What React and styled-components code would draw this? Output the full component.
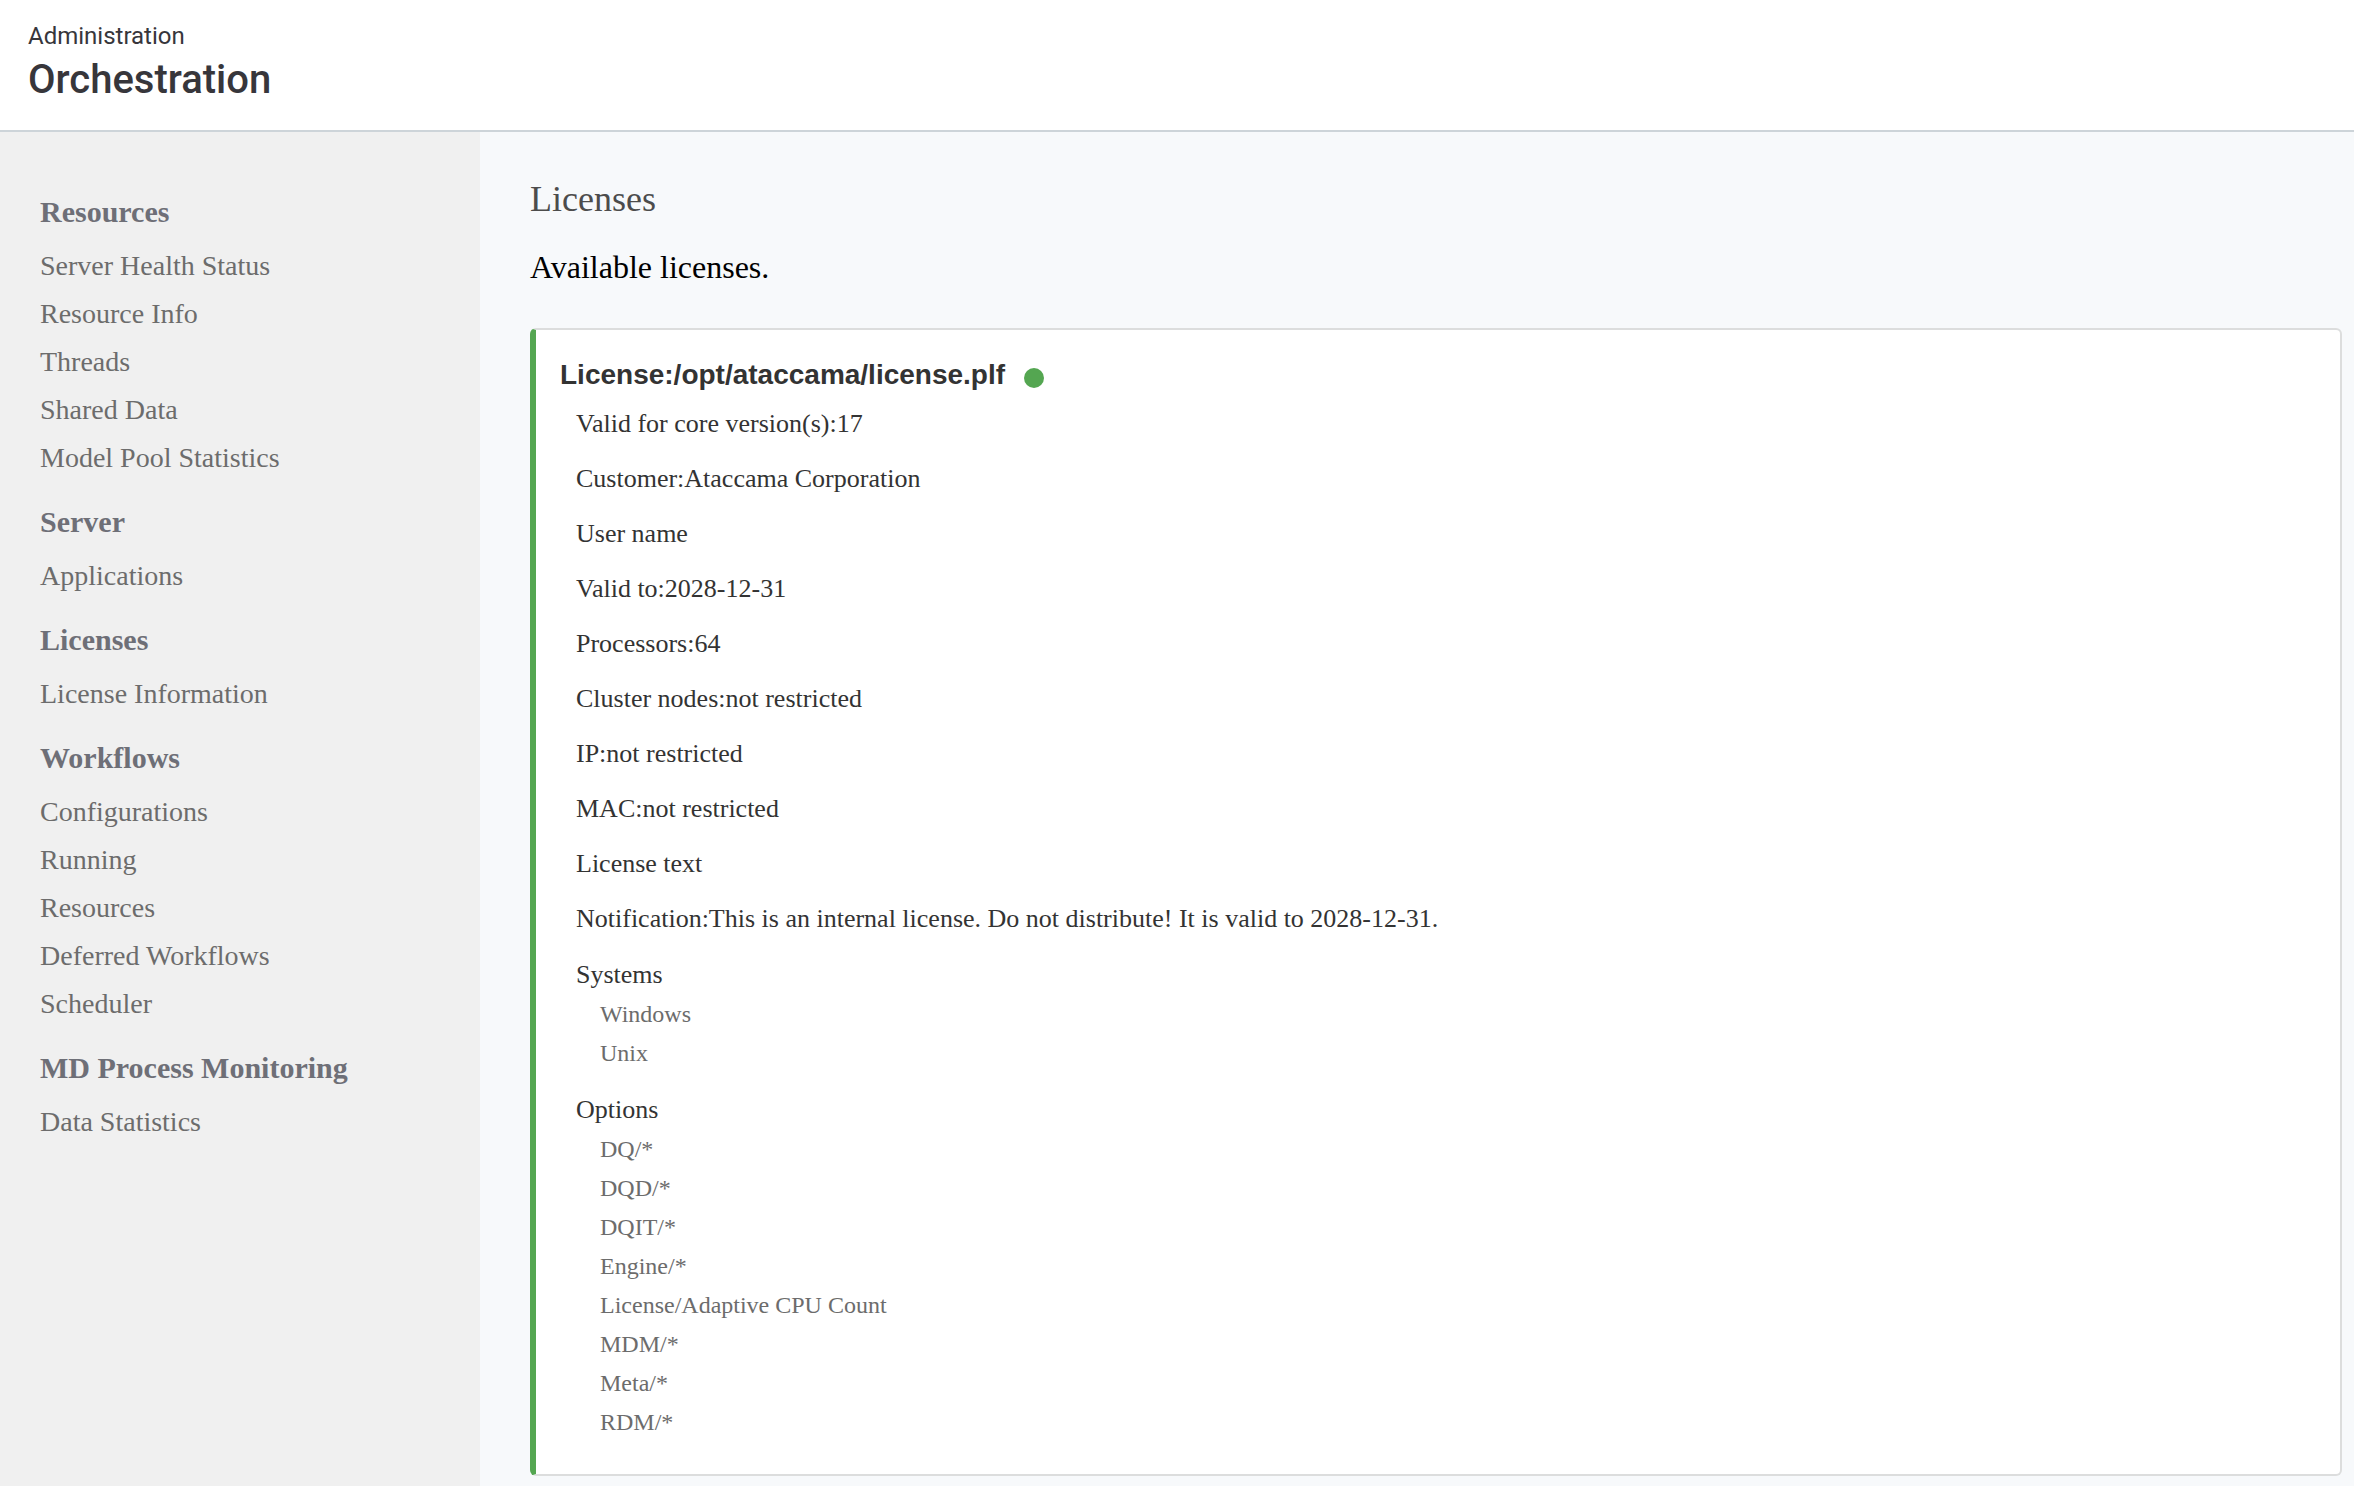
import React from 'react'
import styled, { createGlobalStyle } from 'styled-components'

const GlobalStyle = createGlobalStyle`
  * {
    box-sizing: border-box;
    margin: 0;
    padding: 0;
  }
  body {
    background: #f7f9fb;
    color: #333;
    font-family: 'Liberation Serif', 'Times New Roman', serif;
    -webkit-font-smoothing: antialiased;
  }
  ul {
    list-style: none;
  }
`

const Page = styled.div`
  display: flex;
  flex-direction: column;
  min-height: 100vh;
`

const Header = styled.header`
  padding: 20px 28px 24px;
  background: #fff;
  border-bottom: 2px solid #cdd4d9;
  color: #37363b;
  font-family: Roboto, sans-serif;
`

const Section = styled.p`
  margin-bottom: 2px;
  font-size: 24px;
  line-height: 32px;
`

const AppName = styled.h1`
  font-size: 40px;
  font-weight: 500;
  line-height: 52px;
`

const Body = styled.div`
  display: flex;
  flex: 1;
`

const Sidebar = styled.nav`
  display: flex;
  flex-direction: column;
  gap: 22px;
  flex: 0 0 480px;
  padding: 62px 40px;
  background: #f0f0f0;
`

const MenuTitle = styled.h2`
  margin-bottom: 12px;
  color: #6e6f77;
  font-size: 30px;
  line-height: 36px;
`

const MenuLink = styled.a`
  display: block;
  color: #6c6c6c;
  font-size: 28px;
  line-height: 48px;
  text-decoration: none;

  &:hover {
    color: #333;
  }
`

const Main = styled.main`
  flex: 1;
  min-width: 0;
  padding: 45px 12px 10px 50px;
`

const Title = styled.h2`
  color: #4c4c4c;
  font-size: 36px;
  font-weight: 400;
  line-height: 44px;
`

const Intro = styled.p`
  margin: 26px 0 41px;
  color: #000;
  font-size: 32px;
  line-height: 40px;
`

const Card = styled.section`
  padding: 27px 24px 32px;
  background: #fff;
  border: 2px solid #dcdddd;
  border-left: 6px solid #54a651;
  border-radius: 6px;
`

const CardHeader = styled.div`
  display: flex;
  align-items: center;
  gap: 19px;
  margin-bottom: 16px;
`

const CardTitle = styled.h3`
  color: #333;
  font-family: 'Liberation Sans', Arial, sans-serif;
  font-size: 28px;
  line-height: 36px;
`

const Status = styled.span`
  width: 20px;
  height: 20px;
  margin-top: 6px;
  border-radius: 50%;
  background: ${({ $valid }) => ($valid ? '#54a651' : '#d9534f')};
`

const Fields = styled.ul`
  display: flex;
  flex-direction: column;
  gap: 25px;
  padding-left: 16px;
  font-size: 26px;
  line-height: 30px;
`

const Groups = styled.div`
  display: flex;
  flex-direction: column;
  gap: 22px;
  margin-top: 26px;
  padding-left: 16px;
`

const GroupTitle = styled.h4`
  margin-bottom: 5px;
  font-size: 26px;
  font-weight: 400;
  line-height: 30px;
`

const GroupItem = styled.li`
  padding-left: 24px;
  color: #6c6c6c;
  font-size: 24px;
  line-height: 39px;
`

const menu = [
  {
    title: 'Resources',
    links: ['Server Health Status', 'Resource Info', 'Threads', 'Shared Data', 'Model Pool Statistics'],
  },
  { title: 'Server', links: ['Applications'] },
  { title: 'Licenses', links: ['License Information'] },
  {
    title: 'Workflows',
    links: ['Configurations', 'Running', 'Resources', 'Deferred Workflows', 'Scheduler'],
  },
  { title: 'MD Process Monitoring', links: ['Data Statistics'] },
]

const license = {
  path: '/opt/ataccama/license.plf',
  valid: true,
  fields: [
    ['Valid for core version(s)', '17'],
    ['Customer', 'Ataccama Corporation'],
    ['User name', ''],
    ['Valid to', '2028-12-31'],
    ['Processors', '64'],
    ['Cluster nodes', 'not restricted'],
    ['IP', 'not restricted'],
    ['MAC', 'not restricted'],
    ['License text', ''],
    ['Notification', 'This is an internal license. Do not distribute! It is valid to 2028-12-31.'],
  ],
  groups: [
    { title: 'Systems', items: ['Windows', 'Unix'] },
    {
      title: 'Options',
      items: ['DQ/*', 'DQD/*', 'DQIT/*', 'Engine/*', 'License/Adaptive CPU Count', 'MDM/*', 'Meta/*', 'RDM/*'],
    },
  ],
}

const LicenseCard = ({ path, valid, fields, groups }) => (
  <Card>
    <CardHeader>
      <CardTitle>{`License:${path}`}</CardTitle>
      <Status $valid={valid} role='img' aria-label={valid ? 'Valid' : 'Invalid'} />
    </CardHeader>
    <Fields>
      {fields.map(([label, value]) => (
        <li key={label}>{value ? `${label}:${value}` : label}</li>
      ))}
    </Fields>
    <Groups>
      {groups.map(({ title, items }) => (
        <div key={title}>
          <GroupTitle>{title}</GroupTitle>
          <ul>
            {items.map((item) => (
              <GroupItem key={item}>{item}</GroupItem>
            ))}
          </ul>
        </div>
      ))}
    </Groups>
  </Card>
)

const App = () => {
  return (
    <Page>
      <GlobalStyle />
      <Header>
        <Section>Administration</Section>
        <AppName>Orchestration</AppName>
      </Header>
      <Body>
        <Sidebar aria-label='Administration'>
          {menu.map(({ title, links }) => (
            <div key={title}>
              <MenuTitle>{title}</MenuTitle>
              <ul>
                {links.map((link) => (
                  <li key={link}>
                    <MenuLink href='#'>{link}</MenuLink>
                  </li>
                ))}
              </ul>
            </div>
          ))}
        </Sidebar>
        <Main>
          <Title>Licenses</Title>
          <Intro>Available licenses.</Intro>
          <LicenseCard {...license} />
        </Main>
      </Body>
    </Page>
  )
}

export default App
